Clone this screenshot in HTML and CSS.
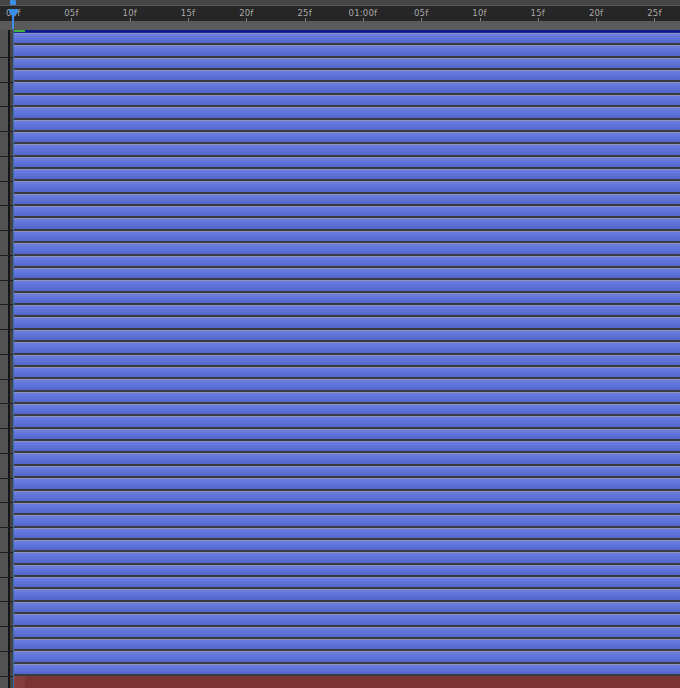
FILE: index.html
```html
<!DOCTYPE html>
<html>
<head>
<meta charset="utf-8">
<link rel="stylesheet" href="styles.css">
</head>
<body>
<div class="app">
  <div class="topbar"></div>
  <div class="ruler">
    <div class="labels">
      <span class="lbl">00f</span><span class="lbl">05f</span><span class="lbl">10f</span><span class="lbl">15f</span><span class="lbl">20f</span><span class="lbl">25f</span><span class="lbl">01:00f</span><span class="lbl">05f</span><span class="lbl">10f</span><span class="lbl">15f</span><span class="lbl">20f</span><span class="lbl">25f</span>
    </div>
  </div>
  <div class="subbar"></div>
  <div class="main">
    <div class="gutter"></div>
    <div class="area">
      <div class="workbar"><div class="green"></div></div>
      <div class="tracks" id="tracks"></div>
      <div class="redrow"><div class="redstart"></div></div>
    </div>
  </div>
  <div class="playhead">
    <div class="ph-top"></div>
    <svg class="ph-tri" width="9" height="9" viewBox="0 0 9 9"><path d="M0 0H9V3L4.5 9L0 3Z" fill="#3d8ee8"/></svg>
    <div class="ph-line"></div>
  </div>
</div>
<script>
  var t = document.getElementById('tracks');
  for (var i = 0; i < 52; i++) { var d = document.createElement('div'); d.className = 'row'; t.appendChild(d); }
</script>
</body>
</html>
```
FILE: styles.css
```css
html, body { margin: 0; padding: 0; background: #2b2b2b; }
.app { position: relative; width: 680px; height: 688px; overflow: hidden; display: flex; flex-direction: column; font-family: "DejaVu Sans", "Liberation Sans", sans-serif; }
.topbar { height: 6px; background: #474747; border-bottom: 1px solid #595959; box-sizing: border-box; }
.ruler { height: 15px; background: #262626; overflow: hidden; }
.labels { display: flex; margin-left: -16px; padding-top: 2px; }
.lbl { flex: 0 0 58.3px; text-align: center; color: #a8a8a8; font-size: 8.5px; line-height: 10px; height: 13px; position: relative; letter-spacing: 0.2px; }
.lbl::after { content: ""; position: absolute; left: 50%; bottom: 0; width: 1px; height: 3px; background: #8a8a8a; }
.subbar { height: 9px; background: #5a5a5a; }
.main { flex: 1; display: flex; min-height: 0; }
.gutter { width: 14px; flex: 0 0 14px; background:
  linear-gradient(90deg, #535353 0 8px, #151515 8px 10px, #454545 10px 13px, #3c6fb0 13px 14px); position: relative; }
.gutter::before { content: ""; position: absolute; left: 0; right: 1px; top: 3px; bottom: 0;
  background: repeating-linear-gradient(180deg, transparent 0 23.76px, #1e1e1e 23.76px 24.76px); }
.area { flex: 1; display: flex; flex-direction: column; }
.workbar { height: 3px; background: #0d1b8e; border-bottom: 1px solid #1c2a9a; box-sizing: border-box; display: flex; }
.green { width: 11px; height: 2px; background: #3fb33f; }
.tracks { height: 643px; display: grid; grid-template-rows: repeat(52, 1fr); }
.row { background: linear-gradient(180deg, #8d93b8 0, #8d93b8 1px, #6a7de0 1px, #5e71d7 50%, #5266c8 calc(100% - 2px), #3a3b42 calc(100% - 2px)); }
.redrow { flex: 1; background: #7a3434; display: flex; }
.redstart { width: 11px; background: #853e3e; }
.playhead { position: absolute; left: 9px; top: 0; width: 9px; height: 30px; }
.ph-top { position: absolute; left: 1px; top: 0; width: 6px; height: 5px; background: #3d8ee8; border-radius: 1px; }
.ph-tri { position: absolute; left: 0; top: 9px; }
.ph-line { position: absolute; left: 3px; top: 9px; width: 2px; height: 20px; background: #3d8ee8; }
```
